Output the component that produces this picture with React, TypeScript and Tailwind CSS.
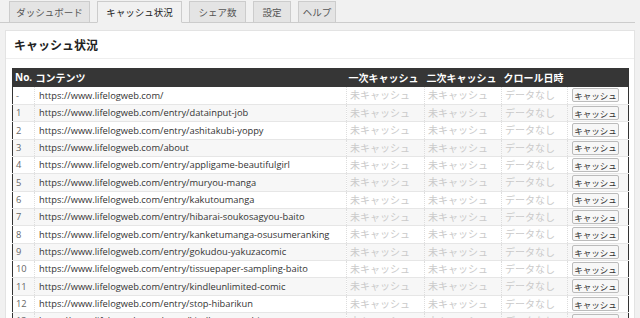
import React from "react";

const jp = { fontFamily: '"Noto Sans CJK JP", "Noto Sans", sans-serif' };
const latin = { fontFamily: '"Open Sans", "Noto Sans CJK JP", sans-serif' };

const tabs = [
  { label: "ダッシュボード", w: "w-[81px]" },
  { label: "キャッシュ状況", w: "w-[85px]", active: true },
  { label: "シェア数", w: "w-[57px]" },
  { label: "設定", w: "w-[38px]" },
  { label: "ヘルプ", w: "w-[38px]" },
];

const base = "https://www.lifelogweb.com/";
const rows = [
  { no: "-", url: base },
  { no: "1", url: base + "entry/datainput-job" },
  { no: "2", url: base + "entry/ashitakubi-yoppy" },
  { no: "3", url: base + "about" },
  { no: "4", url: base + "entry/appligame-beautifulgirl" },
  { no: "5", url: base + "entry/muryou-manga" },
  { no: "6", url: base + "entry/kakutoumanga" },
  { no: "7", url: base + "entry/hibarai-soukosagyou-baito" },
  { no: "8", url: base + "entry/kanketumanga-osusumeranking" },
  { no: "9", url: base + "entry/gokudou-yakuzacomic" },
  { no: "10", url: base + "entry/tissuepaper-sampling-baito" },
  { no: "11", url: base + "entry/kindleunlimited-comic" },
  { no: "12", url: base + "entry/stop-hibarikun" },
  { no: "13", url: base + "entry/kindle-paperwhite" },
];

export default function App() {
  return (
    <div className="w-[640px] h-[318px] overflow-hidden bg-[#f1f1f1]">
      {/* Tabs */}
      <div className="flex items-end gap-[7px] pl-[9px] h-[23px] mr-[5px] border-b border-[#cccccc]">
        {tabs.map((t) => (
          <div
            key={t.label}
            style={jp}
            className={`${t.w} h-[22px] -mb-px flex items-center justify-center text-[9.5px] border border-[#cccccc] ${
              t.active
                ? "bg-[#f1f1f1] border-b-[#f1f1f1] text-[#222]"
                : "bg-[#e4e4e4] text-[#555]"
            }`}
          >
            {t.label}
          </div>
        ))}
      </div>

      {/* Panel */}
      <div className="mx-[5px] mt-[7px] bg-white border border-[#e3e3e3] h-[400px]">
        <h2
          style={jp}
          className="h-[28px] flex items-center px-[8px] text-[12px] font-bold text-[#222] border-b border-[#eeeeee]"
        >
          キャッシュ状況
        </h2>

        <div className="pl-[6px] pt-[9px]">
          <table className="w-[616px] border-collapse border-x border-[#333] table-fixed">
            <colgroup>
              <col className="w-[22px]" />
              <col className="w-[312px]" />
              <col className="w-[78px]" />
              <col className="w-[77px]" />
              <col className="w-[66px]" />
              <col className="w-[61px]" />
            </colgroup>
            <thead>
              <tr style={jp} className="bg-[#363636] text-white text-[10px] font-bold h-[19px]">
                <th className="text-left pl-[2px] font-bold" style={latin}>No.</th>
                <th className="text-left pl-[1px] font-bold">コンテンツ</th>
                <th className="text-left pl-[2px] font-bold">一次キャッシュ</th>
                <th className="text-left pl-[2px] font-bold">二次キャッシュ</th>
                <th className="text-left pl-[2px] font-bold">クロール日時</th>
                <th />
              </tr>
            </thead>
            <tbody>
              {rows.map((r, i) => (
                <tr
                  key={r.no}
                  className={`h-[17.35px] border-b border-[#e6e6e6] ${i % 2 === 1 ? "bg-[#f7f7f7]" : "bg-white"}`}
                >
                  <td style={latin} className="pl-[3px] text-[9.3px] text-[#666] border-r border-dotted border-[#dddddd] leading-none">
                    {r.no}
                  </td>
                  <td style={latin} className="pl-[4px] text-[9.3px] text-[#333] border-r border-dotted border-[#dddddd] leading-none whitespace-nowrap overflow-hidden">
                    {r.url}
                  </td>
                  <td style={jp} className="pl-[3px] text-[10px] text-[#cacaca] border-r border-dotted border-[#dddddd] leading-none">
                    未キャッシュ
                  </td>
                  <td style={jp} className="pl-[3px] text-[10px] text-[#cacaca] border-r border-dotted border-[#dddddd] leading-none">
                    未キャッシュ
                  </td>
                  <td style={jp} className="pl-[3px] text-[10px] text-[#cacaca] border-r border-dotted border-[#dddddd] leading-none">
                    データなし
                  </td>
                  <td className="pl-[4px] leading-none">
                    <button
                      style={jp}
                      className="w-[47px] h-[14px] flex items-center justify-center text-[8.5px] text-[#333] bg-[#f7f7f7] border border-[#bbbbbb] rounded-[2px]"
                    >
                      キャッシュ
                    </button>
                  </td>
                </tr>
              ))}
            </tbody>
          </table>
        </div>
      </div>
    </div>
  );
}
